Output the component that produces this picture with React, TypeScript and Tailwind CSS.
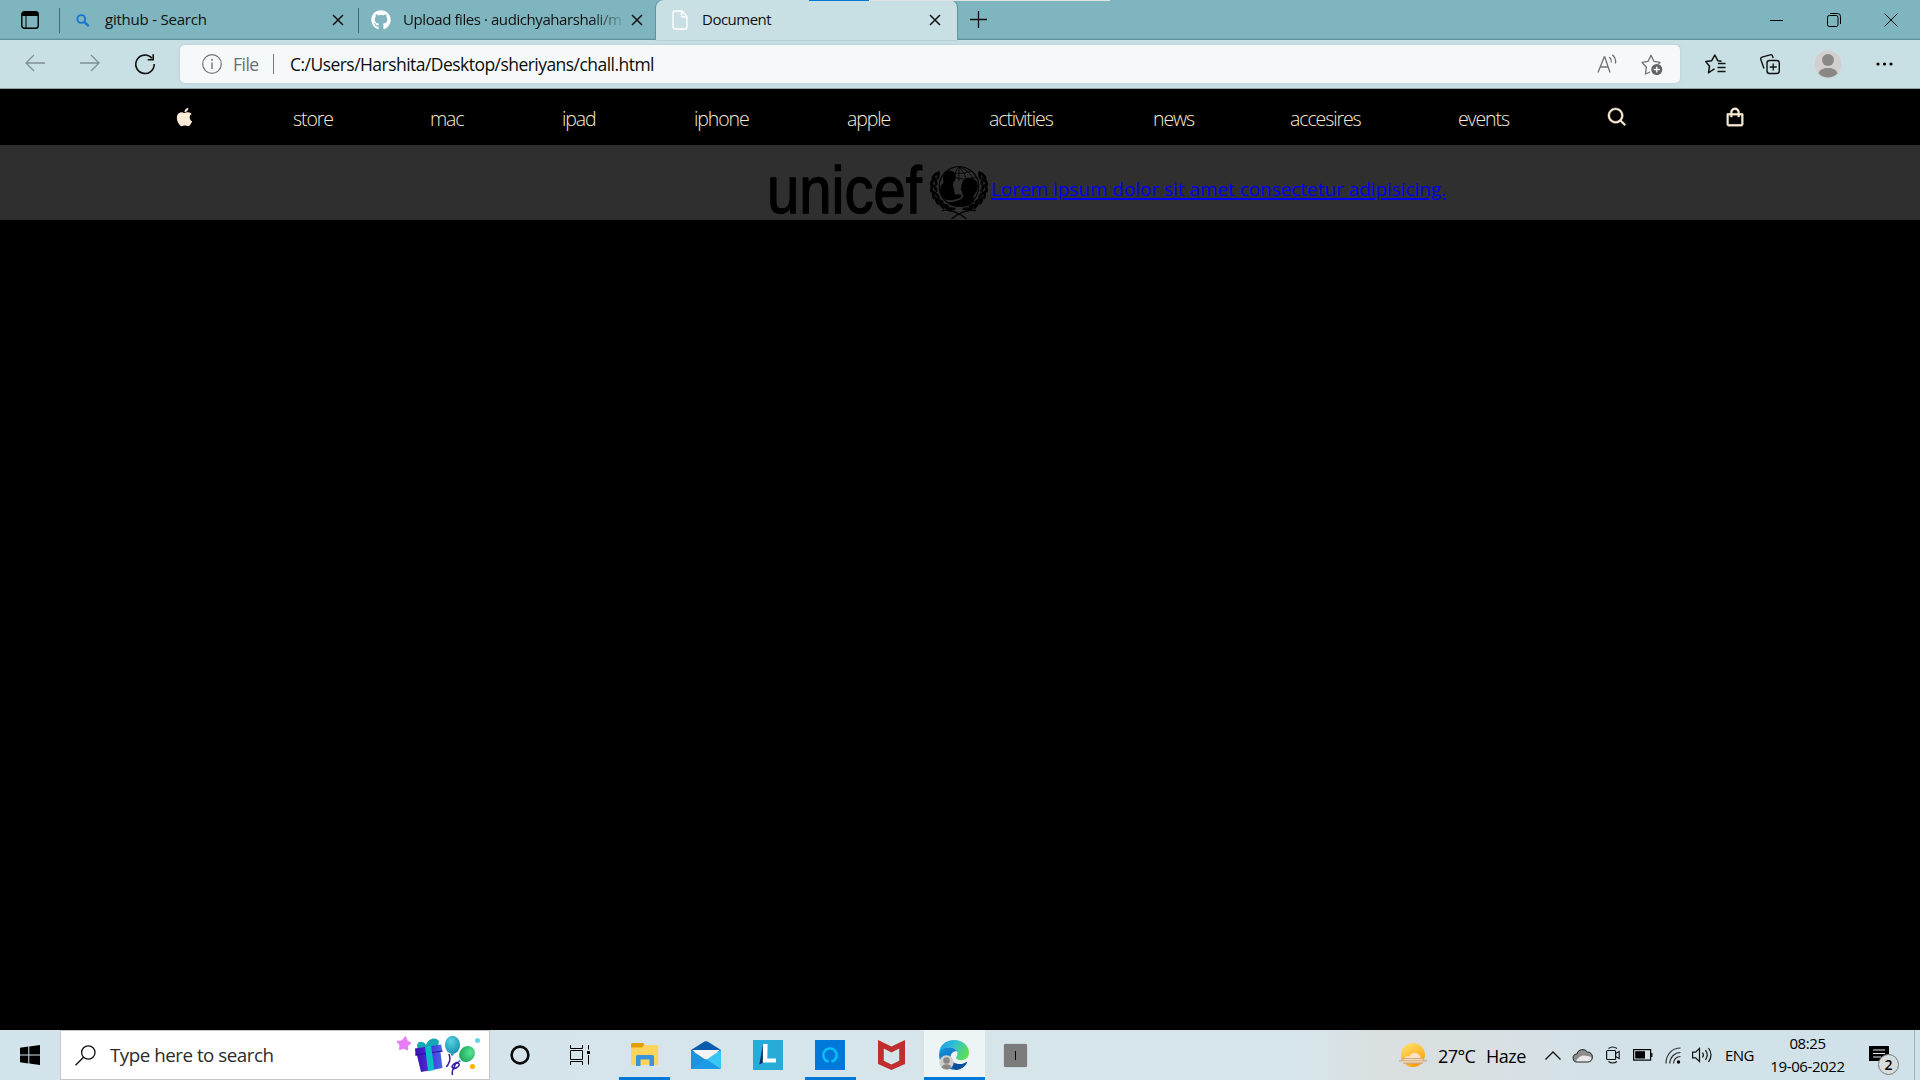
import type { ReactNode } from "react";
import { BiLogoApple, BiSearch, BiShoppingBag } from "react-icons/bi";
import { FaGithub } from "react-icons/fa";

type IcProps = { w: number; h: number; className?: string; children: ReactNode };

function Ic({ w, h, className = "", children }: IcProps) {
  return (
    <svg
      width={w}
      height={h}
      viewBox={`0 0 ${w} ${h}`}
      fill="none"
      className={`block shrink-0 overflow-visible ${className}`}
    >
      {children}
    </svg>
  );
}

function TabClose({ className = "" }: { className?: string }) {
  return (
    <Ic w={12} h={12} className={className}>
      <path d="M1 1l10 10M11 1L1 11" stroke="#111" strokeWidth="1.5" />
    </Ic>
  );
}

function TabBar() {
  return (
    <div className="relative flex h-10 items-center bg-[#7eb5be] shadow-[inset_0_-1px_0_#5f959c,inset_0_-2px_0_#72a9b1]">
      <div className="absolute left-[809px] top-0 z-10 flex h-px w-[301px] bg-[#dfe5e5]">
        <div className="h-px w-[60px] bg-[#0078d7]" />
      </div>
      <Ic w={18} h={18} className="ml-[21px]">
        <rect x="0.8" y="0.8" width="16.4" height="16.4" rx="2.5" stroke="#000" strokeWidth="1.4" />
        <path d="M1 5V3a2 2 0 0 1 2-2h12a2 2 0 0 1 2 2v2z" fill="#000" />
        <path d="M5 5v12" stroke="#000" strokeWidth="1" />
      </Ic>
      <div className="ml-5 h-[25px] w-px bg-[#3f6b72]" />
      <div className="flex h-full w-[298px] items-center pl-4">
        <Ic w={14} h={13}>
          <circle cx="5.3" cy="5" r="3.9" stroke="#1976d2" strokeWidth="1.9" />
          <path d="M8.2 7.8l4.6 4.4" stroke="#1976d2" strokeWidth="2.3" />
        </Ic>
        <span className="ml-[15px] pb-px tracking-[-0.22px]">github - Search</span>
        <TabClose className="ml-auto mr-3.5" />
      </div>
      <div className="h-[25px] w-px bg-[#3f6b72]" />
      <div className="flex h-full w-[297px] items-center pl-3">
        <FaGithub className="size-5 shrink-0 text-white" />
        <span className="ml-3 whitespace-nowrap pb-px tracking-[-0.42px] [mask-image:linear-gradient(to_right,black_86%,transparent_103%)]">
          Upload files · audichyaharshali/m
        </span>
        <TabClose className="ml-auto mr-[13px]" />
      </div>
      <div className="flex h-10 w-[301px] items-center rounded-t-lg bg-[#c8e0e4] pl-4 shadow-[-1px_0_1px_#5f959c,1px_0_1px_#5f959c]">
        <Ic w={16} h={20}>
          <path d="M3 1h7l5 5.5V17a2 2 0 0 1-2 2H3a2 2 0 0 1-2-2V3a2 2 0 0 1 2-2z M9.5 1v4a2 2 0 0 0 2 2H15" stroke="#fff" strokeWidth="1.3" />
        </Ic>
        <span className="ml-3.5 pb-px tracking-[-0.5px]">Document</span>
        <TabClose className="ml-auto mr-4" />
      </div>
      <Ic w={17} h={17} className="mb-px ml-[13px]">
        <path d="M8.5 0v17M0 8.5h17" stroke="#111" strokeWidth="1.3" />
      </Ic>
      <div className="ml-auto flex items-center pr-[22px]">
        <Ic w={13} h={13}>
          <path d="M0 6.5h13" stroke="#000" strokeWidth="1" />
        </Ic>
        <Ic w={14} h={14} className="ml-11">
          <rect x="0.5" y="2.5" width="10.5" height="11" rx="1.8" stroke="#000" />
          <path d="M3 .5h7.5a3 3 0 0 1 3 3V11" stroke="#000" />
        </Ic>
        <Ic w={14} h={14} className="ml-[43px]">
          <path d="M.5.5l13 13M13.5.5l-13 13" stroke="#111" strokeWidth="1" />
        </Ic>
      </div>
    </div>
  );
}

function AddressBar() {
  return (
    <div className="flex h-[49px] items-center border-b border-[#8fa1a6] bg-[#c8dfe3]">
      <Ic w={20} h={18} className="mb-0.5 ml-[25px]">
        <path d="M9 1L1 9l8 8M1 9h19" stroke="#7d9195" strokeWidth="1.3" />
      </Ic>
      <Ic w={20} h={18} className="mb-0.5 ml-[35px]">
        <path d="M11 1l8 8-8 8M19 9H0" stroke="#7d9195" strokeWidth="1.3" />
      </Ic>
      <Ic w={20} h={20} className="ml-[35px]">
        <path d="M17 4.3A9.200 9.200 0 1 0 19.200 10" stroke="#111" strokeWidth="1.6" />
        <path d="M18.200.3v5.400h-5.500" stroke="#111" strokeWidth="1.6" />
      </Ic>
      <div className="ml-[25px] flex h-[38px] w-[1500px] items-center rounded-[5px] bg-[#f5f9fa] shadow-[0_0_3px_#b4cdd2]">
        <Ic w={20} h={20} className="ml-[22px]">
          <circle cx="10" cy="10" r="9.3" stroke="#707476" strokeWidth="1.2" />
          <path d="M10 8.5V15" stroke="#707476" strokeWidth="1.4" />
          <circle cx="10" cy="5.8" r="1" fill="#707476" />
        </Ic>
        <span className="ml-[11px] w-[26px] text-[17.5px] tracking-[-0.5px] text-[#6b6f71]">File</span>
        <div className="ml-3.5 h-5 w-px bg-[#767a7c]" />
        <span className="ml-4 whitespace-nowrap text-[17.5px] tracking-[-0.54px] text-[#0c0c0c]">
          C:/Users/Harshita/Desktop/sheriyans/chall.html
        </span>
        <Ic w={20} h={20} className="ml-auto">
          <path d="M1 18.500L7.200 3h.6L13 18.500M3.200 13h8.200" stroke="#6f7375" strokeWidth="1.3" />
          <path d="M12.300 3c1.600 1.400 2.200 3.200 2 5.500M15.300.8c2.700 2.200 3.700 5 3.200 8.700" stroke="#6f7375" strokeWidth="1.3" />
        </Ic>
        <Ic w={22} h={21} className="ml-6 mr-[17px]">
          <path d="M9 18l-4.600 2 1-6.800L.9 8.300l6.200-1L10 1.400l2.900 5.900 6.200 1-2 2.100" stroke="#6f7375" strokeWidth="1.3" strokeLinejoin="round" />
          <circle cx="15.800" cy="15.500" r="5.500" fill="#5f6365" />
          <path d="M15.800 12.500v6M12.800 15.500h6" stroke="#fff" strokeWidth="1.3" />
        </Ic>
      </div>
      <Ic w={21} h={20} className="ml-[25px]">
        <path d="M7.500 16l-4 2.800 1-6.600L.8 7.600l5.900-.9L9.800 1l3 5.700 3.700.5M7.500 16l2-1.200" stroke="#111" strokeWidth="1.5" strokeLinejoin="round" />
        <path d="M13 9.500h7.500M12.500 13.500h8M12.500 17.500h8" stroke="#111" strokeWidth="1.5" />
      </Ic>
      <Ic w={20} h={20} className="ml-[34px]">
        <rect x="7" y="6.500" width="12.300" height="13" rx="2.500" stroke="#111" strokeWidth="1.4" />
        <path d="M13.200 9.500v7M9.700 13h7" stroke="#111" strokeWidth="1.3" />
        <path d="M4 14.500L.9 5.700a2 2 0 0 1 1.200-2.500L10 .9a2 2 0 0 1 2.600 1.300l.6 1.800" stroke="#111" strokeWidth="1.4" />
      </Ic>
      <Ic w={28} h={28} className="ml-[34px]">
        <circle cx="14" cy="14" r="13.5" fill="#d2cfcd" />
        <circle cx="14" cy="10" r="6" fill="#8b8785" />
        <path d="M4.500 23.500C5.500 19.500 9.500 18 14 18s8.500 1.500 9.500 5.500A13.500 13.500 0 0 1 4.500 23.500z" fill="#8b8785" />
      </Ic>
      <Ic w={17} h={4} className="ml-[34px]">
        <circle cx="2" cy="2" r="1.600" fill="#000" />
        <circle cx="8.500" cy="2" r="1.600" fill="#000" />
        <circle cx="15" cy="2" r="1.600" fill="#000" />
      </Ic>
    </div>
  );
}

const LINKS = ["store", "mac", "ipad", "iphone", "apple", "activities", "news", "accesires", "events"];

function SiteNav() {
  return (
    <nav className="grid h-14 grid-cols-[120px_137px_132px_132px_153px_142px_164px_137px_168px_148px_118px_23px] items-center bg-black pl-[173px] text-[19.5px] font-light tracking-[-1.1px] text-[#faebd7]">
      <BiLogoApple className="size-[23px]" />
      {LINKS.map((l) => (
        <span key={l} className="pt-[3px]">
          {l}
        </span>
      ))}
      <BiSearch className="size-[23px]" stroke="currentColor" strokeWidth={0.4} />
      <BiShoppingBag className="size-[22px]" stroke="currentColor" strokeWidth={0.4} />
    </nav>
  );
}

/* Leaves are laid in pairs along an arc centred on the globe. */
const LEAF_ANGLES = [112, 128, 144, 160, 176, 192, 208];

function Laurel() {
  return (
    <g fill="#000">
      {LEAF_ANGLES.map((deg) => {
        const a = (deg * Math.PI) / 180;
        const x = 31 + 25.5 * Math.cos(a);
        const y = 22.5 + 24 * Math.sin(a);
        return (
          <g key={deg}>
            <ellipse rx="4.3" ry="1.4" transform={`translate(${x + 1.8} ${y}) rotate(${deg + 70})`} />
            <ellipse rx="4.5" ry="1.4" transform={`translate(${x - 1.8} ${y}) rotate(${deg + 105})`} />
          </g>
        );
      })}
    </g>
  );
}

function UnicefLogo() {
  return (
    <Ic w={222} h={56}>
      <text
        x="-2"
        y="49"
        textLength="155"
        lengthAdjust="spacingAndGlyphs"
        fill="#000"
        stroke="#000"
        strokeWidth="1.3"
        className="font-['Liberation_Sans'] text-[66px]"
      >
        unicef
      </text>
      <g transform="translate(159 0)">
        <circle cx="31" cy="22.5" r="19.8" stroke="#000" strokeWidth="1.1" />
        <path
          d="M31 3V17M19.500 7q11.500 5 23 0M25 13q12 4 23 0M31 3q-5 5-5 13M31 3q6 6 7 11M31 3q11 3 15 14"
          stroke="#000"
          strokeWidth="0.8"
        />
        <path
          d="M21.500 6.800c4 0 6.300 2.600 6.300 6 0 3-1.600 5-2.800 6.500-.3 2 .4 4.200 1.200 6.700l.6 4.200 5.700.3c1.500.9 1 2.800-.6 3.400l-6.500 2.200c-2.500.6-7.500.2-9.400-1.600C13 31.500 11.800 27.500 12.300 23.500c.4-2.500 2-3 3.300-5-1.900-6 .6-11.700 5.900-11.700z"
          fill="#000"
        />
        <path
          d="M41 13.800c5.500 0 8.800 3.500 8.800 8.500 0 5.700-3.300 7-4.300 10.500-.5 2.300.4 3.700 1 4.200C43 41.500 37 43 31 43c-5 0-8.500-2.200-10.500-5 6.500 0 12-1.300 15-5.200-.3-1.900-1.700-2.900-1.200-4.800l-1.800-2.500c1.300-1.200.7-3.700 1.300-5.700 1-3.500 3.800-6 7.200-6z"
          fill="#000"
        />
        <Laurel />
        <g transform="translate(62 0) scale(-1 1)">
          <Laurel />
        </g>
        <path d="M14 46.500c8-1.500 15 1 24.500 8.500M48 46.500c-8-1.500-15 1-24.500 8.500" stroke="#000" strokeWidth="1.4" />
      </g>
    </Ic>
  );
}

function Gift() {
  return (
    <Ic w={84} h={40}>
      <defs>
        <linearGradient id="giftBox" x1="0" x2="1">
          <stop offset="0" stopColor="#3b12b5" />
          <stop offset="0.4" stopColor="#4a22cf" />
          <stop offset="1" stopColor="#4568ee" />
        </linearGradient>
        <radialGradient id="balloonBlue" cx="0.4" cy="0.3" r="0.8">
          <stop offset="0" stopColor="#57d3e2" />
          <stop offset="1" stopColor="#1588ad" />
        </radialGradient>
        <radialGradient id="balloonGreen" cx="0.6" cy="0.3" r="0.8">
          <stop offset="0" stopColor="#58e592" />
          <stop offset="1" stopColor="#149e55" />
        </radialGradient>
      </defs>
      <path d="M8.500.5l1.800 4.500 3.700 2-3.200 2.500-.3 4.500-3.700-1.700L2.500 13.500l.5-4.500L0 5.500l5-.7z" fill="#e77df5" stroke="#e77df5" strokeLinejoin="round" />
      <path d="M20 10c0-5 6-6 9-1 2-6 9-9 13-4l-1 6-20 3z" fill="#12a8b5" />
      <path d="M18 12.500l26-4 1.500 7-2 .6 2 16-21.500 4-4-16.500-1.500.2z" fill="url(#giftBox)" />
      <path d="M18.500 19l27-4" stroke="#2d0c9b" strokeWidth="1" />
      <path d="M28 10.500l6-1 3.500 24.500-6.500 1z" fill="#08bfc7" />
      <path d="M52 18q2 6-.5 9.500-1 3-2.500 3M62 26q-6 1-7 5 .5 3 5 .5 4-3 1-4.500-3-.5-3.500 3.500-3 4-2 8.500" stroke="#3c1aa0" strokeWidth="1.5" />
      <ellipse cx="55.500" cy="8.800" rx="7.600" ry="9" fill="url(#balloonBlue)" />
      <ellipse cx="70" cy="18" rx="7.500" ry="8.500" transform="rotate(40 70 18)" fill="url(#balloonGreen)" />
      <path d="M54 17.500h3l-1 2h-2zM62 23.500l2.500 2-3 .5z" fill="#158fa0" />
      <circle cx="80.500" cy="4.500" r="2.500" fill="#69d2e6" />
      <circle cx="75.500" cy="30.500" r="2.600" fill="#ffb300" />
    </Ic>
  );
}

function AppSlot({ className = "", children }: { className?: string; children: ReactNode }) {
  return <div className={`flex h-full items-center justify-center ${className}`}>{children}</div>;
}

function Taskbar() {
  return (
    <footer className="flex h-[50px] items-center bg-[linear-gradient(90deg,#d3e3ec_0%,#d6e5ea_45%,#d6e5ea_68%,#dadfe0_72%,#d8e0e3_78%,#d2e2e8_84%,#d0e1e9_100%)] text-black">
      <Ic w={20} h={20} className="ml-5">
        <path d="M0 2.800L8.300 1.600v7.900H0zM9.300 1.400L20 0v9.500H9.300zM0 10.500h8.300v7.900L0 17.200zM9.300 10.500H20V20L9.300 18.600z" fill="#000" />
      </Ic>
      <div className="ml-5 flex h-full w-[430px] items-center border border-[#c6c9cb] bg-white">
        <Ic w={21} h={21} className="ml-3.5">
          <circle cx="13.3" cy="7.5" r="6.7" stroke="#111" strokeWidth="1.3" />
          <path d="M8.500 12.300L.5 20.300" stroke="#111" strokeWidth="1.5" />
        </Ic>
        <span className="ml-[14px] whitespace-nowrap text-[18.75px] tracking-[-0.48px] text-[#2b2b2b]">
          Type here to search
        </span>
        <div className="ml-auto mr-2 h-[38px]">
          <Gift />
        </div>
      </div>
      <AppSlot className="w-[60px]">
        <Ic w={20} h={20}>
          <circle cx="10" cy="10" r="8.4" stroke="#0a0a0a" strokeWidth="2.6" />
        </Ic>
      </AppSlot>
      <AppSlot className="w-[60px]">
        <Ic w={20} h={20}>
          <path d="M.5 0v3.500h12V0M.5 20v-3.500h12V20M.5 5.500h12v9H.5zM18.500 0v4.500M18.500 10v9.500" stroke="#000" />
          <rect x="17" y="6" width="3" height="3" fill="#000" />
        </Ic>
      </AppSlot>
      <AppSlot className="ml-[9px] w-[51px] border-b-[3px] border-[#0078d7] pr-px pt-0.5">
        <Ic w={27} h={23}>
          <path d="M0 1.500A1.500 1.500 0 0 1 1.500 0H12l1.500 2-1.500 3H0z" fill="#e0a004" />
          <path d="M0 4.500h11l2.500-2.500H26a1.200 1.200 0 0 1 1.200 1.200V21A1.200 1.200 0 0 1 26 22H1a1 1 0 0 1-1-1z" fill="#ffd45e" />
          <path d="M5 23V13.500A1.500 1.500 0 0 1 6.500 12h15a1.500 1.500 0 0 1 1.500 1.500V23h-4.500v-6.500h-9V23z" fill="#3a94dc" />
        </Ic>
      </AppSlot>
      <AppSlot className="ml-[21px] w-[30px]">
        <Ic w={30} h={28}>
          <path d="M0 9L13.500.6a3 3 0 0 1 3 0L30 9v2H0z" fill="#0a5cad" />
          <path d="M1 9h28L15 19z" fill="#f4f4f4" />
          <path d="M0 9l15 10L30 28H0z" fill="#1c93de" />
          <path d="M30 9L15 19l15 9z" fill="#38c6f4" />
          <path d="M0 28l15-10 15 10z" fill="#1e9be6" />
        </Ic>
      </AppSlot>
      <AppSlot className="ml-8 w-[30px]">
        <Ic w={30} h={30}>
          <rect width="30" height="30" fill="#27abd8" />
          <path d="M10 4.500L6.300 24.500l4-2z" fill="#0c2d63" />
          <path d="M10 4h4.600l-.3 14.500H23v4H9.800z" fill="#fff" />
        </Ic>
      </AppSlot>
      <AppSlot className="ml-[22px] w-[51px] border-b-[3px] border-[#0078d7] pr-px pt-[3px]">
        <Ic w={30} h={30}>
          <rect width="30" height="30" fill="#0078d9" />
          <path d="M12.800 21.400a6.700 6.700 0 1 1 4.400 0" stroke="#05c5fb" strokeWidth="2.2" strokeLinecap="round" />
        </Ic>
      </AppSlot>
      <AppSlot className="ml-[22px] w-[27px]">
        <Ic w={27} h={30}>
          <path fillRule="evenodd" d="M0 0l13.500 6.500L27 0v24l-13.500 6L0 24zM5.800 8.500v12.300l7.700 3.800 7.700-3.800V8.500l-7.700 4z" fill="#c22e2f" />
        </Ic>
      </AppSlot>
      <AppSlot className="ml-[19px] w-[61px] border-b-[3px] border-[#0078d7] bg-[#edf4f6] pr-px pt-[3px]">
        <Ic w={30} h={30}>
          <defs>
            <linearGradient id="edgeTop" x1="0" y1="0.2" x2="1" y2="0.6">
              <stop offset="0" stopColor="#1b9be6" />
              <stop offset="0.45" stopColor="#31c0d3" />
              <stop offset="1" stopColor="#62e04b" />
            </linearGradient>
            <linearGradient id="edgeLeft" x1="0" y1="0" x2="0.7" y2="1">
              <stop offset="0" stopColor="#1494df" />
              <stop offset="1" stopColor="#0b62b8" />
            </linearGradient>
          </defs>
          <path d="M0 13C1 5 7 0 15 0c9 0 15 6 15 12.500 0 5-4 7.700-7.500 7.700-3 0-5.500-1-5.500-2.500 0-1 1.500-1.700 1.500-4C18.500 10 15 7.500 11 7.500 6 7.500 2 9.500 0 13z" fill="url(#edgeTop)" />
          <path d="M0 15C0 10 5 7.200 10 7.200c4.500 0 7.500 2.500 8 4.300-3-1-6.500 1.500-6.500 6 0 6 5 11 8 12C10 31 0 25 0 15z" fill="url(#edgeLeft)" />
          <path d="M11.500 17.500c0 4 5 6.500 9 6.500 3 0 5-1 6.700-1.800.8-.3 1 .2.700.8C26 27 21 30 17 30c-4-1.500-6-7-5.500-12.500z" fill="#0c4f9c" />
          <circle cx="7.5" cy="22.5" r="7.2" fill="#d0cecd" />
          <circle cx="7.5" cy="20.5" r="3.3" fill="#8a8785" />
          <path d="M2.500 27.500c.8-2.500 2.700-3.300 5-3.300s4.200.8 5 3.300a7 7 0 0 1-10 0z" fill="#8a8785" />
        </Ic>
      </AppSlot>
      <AppSlot className="ml-[19px] w-[23px]">
        <div className="flex size-[23px] items-center justify-center rounded-[2px] bg-[#7c7c7c] shadow-[0_0_1px_#555]">
          <div className="h-[9px] w-[1.5px] bg-black" />
        </div>
      </AppSlot>
      <div className="ml-auto flex h-full items-center">
        <Ic w={28} h={25}>
          <defs>
            <linearGradient id="sun" x1="0.2" y1="0" x2="0.7" y2="1">
              <stop offset="0" stopColor="#ffe066" />
              <stop offset="1" stopColor="#ff9a0a" />
            </linearGradient>
          </defs>
          <circle cx="14" cy="12" r="12" fill="url(#sun)" />
          <path d="M5 16c1-3 4-3 5.500-2.500C12 10 16 9 18.500 10.500s3.500 3.500 3 5.500z" fill="#fbe2c3" />
          <path d="M2 15.700h22M0 17.800h28M4 20h20" stroke="#c9a98c" strokeWidth="1.3" />
          <path d="M5 16.700h19M3 18.900h21" stroke="#f5e8dc" strokeWidth="1" />
        </Ic>
        <span className="ml-[11px] w-12 pt-0.5 text-[18px] tracking-[-0.6px]">27°C</span>
        <span className="w-[59px] pt-0.5 text-[18px] tracking-[-0.5px]">Haze</span>
        <Ic w={16} h={9}>
          <path d="M.5 8.500L8 1l7.500 7.500" stroke="#111" strokeWidth="1.3" />
        </Ic>
        <Ic w={20} h={15} className="ml-3">
          <path d="M4.500 14a4 4 0 0 1-.7-8A6 6 0 0 1 14.500 4 4.800 4.800 0 0 1 19.400 9c0 3-2 5-4.400 5z" fill="#8e8e8e" />
          <path d="M3 13c3-5 7-6.500 11-5 3 0 5 1.500 5 3.500-1 2-2.500 2.500-4 2.500H4.500z" fill="#e9e9e9" />
          <path d="M4.500 14a4 4 0 0 1-.7-8A6 6 0 0 1 14.500 4 4.800 4.800 0 0 1 19.400 9c0 3-2 5-4.400 5z" stroke="#222" strokeWidth="1" />
        </Ic>
        <Ic w={14} h={18} className="ml-[13px]">
          <rect x="0.6" y="4.5" width="9" height="9" rx="1" stroke="#111" strokeWidth="1.2" />
          <path d="M9.600 7.500l3.600-2v7l-3.600-2M2.500 2.500Q6.500-.5 11 2.500M2.500 15.500q4 3 8.500 0" stroke="#111" strokeWidth="1.1" />
        </Ic>
        <Ic w={20} h={12} className="ml-[13px]">
          <rect x="0.6" y="0.6" width="17" height="10.5" stroke="#000" strokeWidth="1.2" />
          <rect x="2.2" y="2.2" width="9.8" height="7.3" fill="#000" />
          <path d="M18.800 4v4" stroke="#000" strokeWidth="1.3" />
        </Ic>
        <Ic w={16} h={17} className="ml-3">
          <path d="M1 16.500C1 7.500 7 1 15.500 1M4.800 16.500c0-6 4.700-11 10.700-11M8.500 16.500c0-4 3-7 7-7" stroke="#333" strokeWidth="1.2" />
          <circle cx="13.5" cy="15" r="1.7" fill="#000" />
        </Ic>
        <Ic w={20} h={18} className="ml-[11px]">
          <path d="M.6 6.200h3L7.500 2.500v13L3.600 11.800h-3z" stroke="#111" strokeWidth="1.2" />
          <path d="M10.500 6.500q1.800 2.500 0 5M13.500 4.200q3.500 4.800 0 9.600M16.500 2q5 7 0 14" stroke="#111" strokeWidth="1.2" />
        </Ic>
        <span className="ml-[13px] w-[45px] text-[15px] tracking-[-0.6px]">ENG</span>
        <div className="w-[75px] whitespace-nowrap pb-[1px] text-center text-[15px] leading-[23px] tracking-[-0.4px]">
          <div>08:25</div>
          <div>19-06-2022</div>
        </div>
        <div className="relative ml-6 h-[18px] w-5">
          <Ic w={20} h={19}>
            <path d="M0 0h20v15h-6l-4 4v-4H0z" fill="#000" />
            <path d="M4 4h12M4 7.500h12M4 11h8" stroke="#dfe9ed" strokeWidth="1.2" />
          </Ic>
          <div className="absolute left-[9px] top-[8px] flex size-[21px] items-center justify-center rounded-full border border-[#77797a] bg-[#d9dcdd] text-[14px] font-semibold leading-none">
            2
          </div>
        </div>
        <div className="ml-[25px] mr-[5px] h-full w-px bg-[#9db4be]" />
      </div>
    </footer>
  );
}

export default function App() {
  return (
    <div className="flex h-[1080px] w-[1920px] flex-col overflow-hidden bg-black font-['Open_Sans',sans-serif] text-[15px] text-[#101010]">
      <TabBar />
      <AddressBar />
      <SiteNav />
      <main className="flex-1 bg-black">
        <div className="flex h-[75px] items-start bg-[#2f2f2f] pl-[769px] pt-[19px]">
          <UnicefLogo />
          <a
            href="#"
            className="mt-3 whitespace-nowrap text-[19px] leading-[26px] tracking-[-0.05px] text-[#0000f4] underline decoration-2 underline-offset-[2px]"
          >
            Lorem ipsum dolor sit amet consectetur adipisicing.
          </a>
        </div>
      </main>
      <Taskbar />
    </div>
  );
}
